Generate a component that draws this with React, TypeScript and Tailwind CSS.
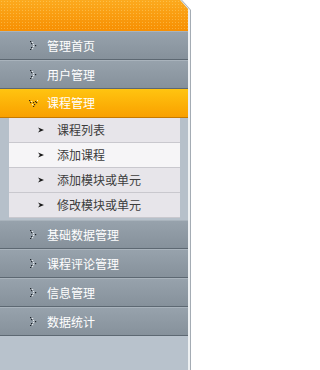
import React from 'react'

const mainTop = ['管理首页', '用户管理']
const subItems = ['课程列表', '添加课程', '添加模块或单元', '修改模块或单元']
const mainBottom = ['基础数据管理', '课程评论管理', '信息管理', '数据统计']

// dotted arrow used on the grey rows
const DotArrow = () => (
  <svg width="8" height="9" viewBox="0 0 8 9" className="shrink-0">
    {[
      [0, 0], [2, 1], [1, 2], [3, 3], [5, 4], [3, 5], [1, 6], [2, 7], [0, 8],
    ].map(([x, y], i) => (
      <rect key={i} x={x} y={y} width="1.2" height="1.2" fill={i % 2 ? '#e4e8ec' : '#1e242a'} />
    ))}
  </svg>
)

const DotDown = () => (
  <svg width="9" height="7" viewBox="0 0 9 7" className="shrink-0">
    {[
      [0, 0], [2, 1], [4, 2], [6, 1], [8, 0], [1, 2], [7, 2], [3, 4], [5, 4], [4, 6],
    ].map(([x, y], i) => (
      <rect key={i} x={x} y={y} width="1.2" height="1.2" fill={i % 3 === 1 ? '#fff3c0' : '#3a2a10'} />
    ))}
  </svg>
)

const SubArrow = () => (
  <svg width="6" height="6" viewBox="0 0 6 6" className="shrink-0">
    <polygon points="0,0.5 6,3 0,5.5 1.8,3" fill="#1a1a1a" />
  </svg>
)

const MainRow = ({ label }: { label: string }) => (
  <div className="h-[29px] flex items-center pl-[30px] gap-[9px] bg-gradient-to-b from-[#97a2ac] to-[#86919b] border-t border-t-[#a9b3bc] border-b border-b-[#5d6872]">
    <DotArrow />
    <span className="text-white text-[12px] leading-none">{label}</span>
  </div>
)

const App = () => {
  return (
    <div className="w-[254px] h-[370px] bg-white font-['Noto_Sans_CJK_SC',sans-serif]">
      <div className="w-[191px] h-full bg-[#a4acb4] [clip-path:polygon(0_0,182px_0,191px_10px,191px_100%,0_100%)]">
        <div className="w-[190px] h-full bg-[#eef1f3] [clip-path:polygon(0_0,181px_0,190px_10px,190px_100%,0_100%)]">
          <div className="w-[188px] h-full flex flex-col bg-[#b8c2cc] [clip-path:polygon(0_0,180px_0,188px_9px,188px_100%,0_100%)]">
            {/* header */}
            <div className="h-[31px] shrink-0 [background:radial-gradient(circle,rgba(255,230,150,0.35)_0.8px,transparent_1px)_0_0/3px_3px,linear-gradient(#fcaa1e,#f78f02)]" />

            {mainTop.map((m) => (
              <MainRow key={m} label={m} />
            ))}

            {/* active group */}
            <div className="h-[29px] flex items-center pl-[29px] gap-[9px] bg-gradient-to-b from-[#ffc410] to-[#f9a000] border-b border-b-[#c67a00]">
              <DotDown />
              <span className="text-white text-[12px] leading-none">课程管理</span>
            </div>

            <div className="bg-[#b6c0ca] pl-[9px] pr-[8px] pb-[2px]">
              {subItems.map((s, i) => (
                <div
                  key={s}
                  className={
                    'h-[25px] flex items-center pl-[29px] gap-[13px] border-b border-b-[#c9c8ce] ' +
                    (i === 1 ? 'bg-[#f6f5f7]' : 'bg-[#e7e5ea]')
                  }
                >
                  <SubArrow />
                  <span className="text-[#3c3c3c] text-[12px] leading-none">{s}</span>
                </div>
              ))}
            </div>

            {mainBottom.map((m) => (
              <MainRow key={m} label={m} />
            ))}

            <div className="flex-1 bg-[#b8c2cc]" />
          </div>
        </div>
      </div>
    </div>
  )
}

export default App
